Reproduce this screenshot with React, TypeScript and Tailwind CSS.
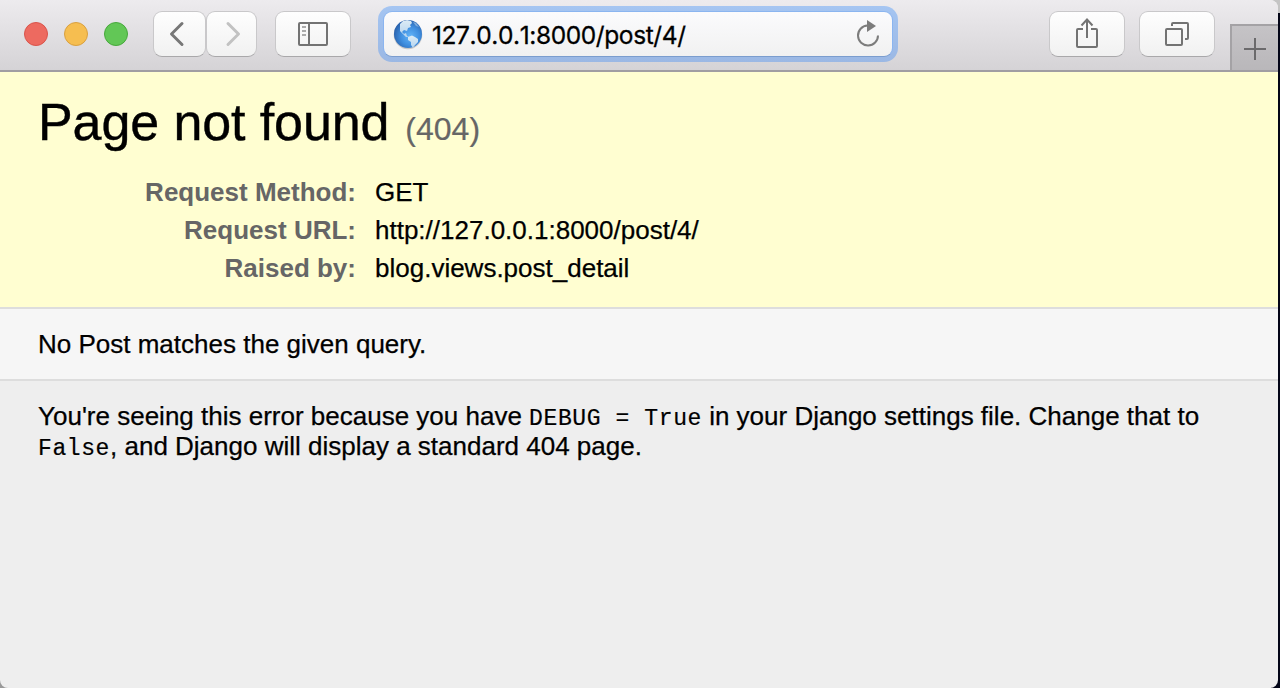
import type { ReactNode } from "react";

const buttonFace =
  "flex h-[46px] items-center justify-center rounded-[9px] border border-[#c9c8ca] border-b-[#a9a8aa] bg-gradient-to-b from-[#fefefe] to-[#f1f1f1]";

const code =
  "font-['Liberation_Mono',monospace] text-[23px] leading-none tracking-[0.6px] [-webkit-text-stroke:0.2px_black]";

function Globe() {
  return (
    <svg width="32" height="32" viewBox="0 0 32 32" className="shrink-0">
      <defs>
        <radialGradient id="sea" cx="0.58" cy="0.58" r="0.6">
          <stop offset="0" stopColor="#62b4f8" />
          <stop offset="0.55" stopColor="#3f8edf" />
          <stop offset="1" stopColor="#2a62ad" />
        </radialGradient>
        <linearGradient id="land" x1="0" y1="0" x2="0" y2="1">
          <stop offset="0" stopColor="#dcecf6" />
          <stop offset="1" stopColor="#b4d3ee" />
        </linearGradient>
        <clipPath id="disc">
          <circle cx="16" cy="16" r="14" />
        </clipPath>
      </defs>
      <circle cx="16" cy="17" r="14.3" fill="#777" opacity="0.35" />
      <circle cx="16" cy="16" r="14" fill="url(#sea)" />
      <g clipPath="url(#disc)" fill="url(#land)">
        <path d="M8 6 L11 3 L15 2 L19 3 L20 5 L18 7 L19 9 L16 10 L15 13 L12 12 L10 14 L12 16 L14 15 L15 18 L17 19 L14 19 L11 16 L8 13 Z" />
        <path d="M16 19 L20 17.500 L23 19 L26 21 L26 24 L23 27 L21 30 L19 27 L19 24 L16 22 Z" />
        <path d="M21 4 L24 5 L27 9 L24 8 Z" opacity="0.5" />
      </g>
    </svg>
  );
}

function Toolbar() {
  return (
    <header className="relative flex h-[72px] w-full items-start border-b-2 border-[#a09da2] bg-gradient-to-b from-[#edebee] to-[#d5d3d6] pt-[11px]">
      <div className="ml-6 mt-[11px] flex gap-4">
        <span className="size-6 rounded-full border border-[#d9544b] bg-[#ed6a60]" />
        <span className="size-6 rounded-full border border-[#d9a040] bg-[#f6be50]" />
        <span className="size-6 rounded-full border border-[#47a83c] bg-[#62c756]" />
      </div>
      <div className="ml-[25px] flex">
        <div className={`${buttonFace} w-[53px]`}>
          <svg width="16" height="26" viewBox="0 0 16 26" fill="none" stroke="#777" strokeWidth="3" strokeLinecap="round" strokeLinejoin="round" className="-translate-x-[3.500px]">
            <path d="M13.500 2.500 3 13l10.500 10.500" />
          </svg>
        </div>
        <div className={`${buttonFace} w-[51px]`}>
          <svg width="16" height="26" viewBox="0 0 16 26" fill="none" stroke="#c2c2c2" strokeWidth="3" strokeLinecap="round" strokeLinejoin="round" className="translate-x-px">
            <path d="M3 2.500 13.500 13 3 23.500" />
          </svg>
        </div>
      </div>
      <div className={`${buttonFace} ml-[18px] w-[76px]`}>
        <svg width="30" height="24" viewBox="0 0 30 24" fill="none" stroke="#737373" strokeWidth="2">
          <rect x="1" y="1" width="28" height="22" rx="1" />
          <path d="M11 1v22" />
          <path d="M4 5h4M4 9h4M4 13h4" stroke="#aaa" />
        </svg>
      </div>
      <div className="-mt-[5px] ml-[27px] h-[56px] w-[520px] rounded-[14px] bg-gradient-to-b from-[#a5c5f2] to-[#9bb8e4] p-[5px]">
        <div className="flex h-full items-center rounded-[9px] border border-[#8bb5f0] border-b-[#7b9dce] bg-gradient-to-b from-[#fbfbfd] to-[#f1f1f1] pl-[8px] pr-[12px]">
          <Globe />
          <span className="ml-[8px] flex-1 translate-y-px whitespace-nowrap font-['Inter',sans-serif] text-[24.500px] leading-[30px] tracking-[-0.4px] text-black [-webkit-text-stroke:0.3px_black] [font-kerning:none]">
            127.0.0.1:8000/post/4/
          </span>
          <svg width="24" height="28" viewBox="0 0 24 28" className="-mt-px">
            <path d="M11.500 5.500A10 10 0 1 0 22 15.500" fill="none" stroke="#7c7c7c" strokeWidth="2" />
            <path d="M11 0v12l9-6z" fill="#7c7c7c" />
          </svg>
        </div>
      </div>
      <div className={`${buttonFace} ml-[151px] w-[76px]`}>
        <svg width="24" height="32" viewBox="0 0 24 32" fill="none" stroke="#737373" strokeWidth="2" className="-translate-y-px">
          <path d="M8 12H3a1 1 0 0 0-1 1v16a1 1 0 0 0 1 1h18a1 1 0 0 0 1-1V13a1 1 0 0 0-1-1h-5M12 21V3M6.500 8.500 12 2.500l5.500 6" />
        </svg>
      </div>
      <div className={`${buttonFace} ml-[14px] w-[76px]`}>
        <svg width="26" height="26" viewBox="0 0 26 26" fill="none" stroke="#737373" strokeWidth="2">
          <rect x="2" y="8" width="16" height="16" rx="1" />
          <path d="M8 5V3a1 1 0 0 1 1-1h14a1 1 0 0 1 1 1v14a1 1 0 0 1-1 1h-2" />
        </svg>
      </div>
      <div className="ml-[15px] mt-[13px] flex h-[46px] w-12 items-center justify-center border-l-2 border-t-2 border-[#a4a2a5] bg-gradient-to-b from-[#c5c3c6] to-[#b9b7ba]">
        <svg width="22" height="22" viewBox="0 0 22 22" stroke="#6b6a6c" strokeWidth="2" className="translate-y-px">
          <path d="M0 11h22M11 0v22" />
        </svg>
      </div>
    </header>
  );
}

function Row({ label, children }: { label: string; children: ReactNode }) {
  return (
    <div className="flex h-[38px] items-center">
      <dt className="w-[318px] text-right font-bold text-[#666]">{label}</dt>
      <dd className="ml-[19px] [-webkit-text-stroke:0.25px_black]">{children}</dd>
    </div>
  );
}

export default function App() {
  return (
    <div className="flex h-[688px] w-[1280px] overflow-hidden bg-[linear-gradient(to_right,#999_20px,transparent_20px),linear-gradient(#c4c4c4_13px,#030517_13px)]">
      <div className="flex w-[1278px] flex-col overflow-hidden rounded-b-[8px] rounded-tr-[8px] bg-[#eee] font-['Liberation_Sans',Arial,sans-serif] text-[26px] leading-[30px] text-black">
        <Toolbar />
        <section className="h-[237px] border-b-2 border-[#ddd] bg-[#fffed1] pl-[38px] pt-[21px]">
          <h1 className="flex h-[58px] items-baseline whitespace-nowrap text-[52px] leading-[58px] tracking-[-0.1px] [-webkit-text-stroke:0.4px_black]">
            Page not found
            <span className="ml-[16px] text-[32px] tracking-normal text-[#666] [-webkit-text-stroke:0.2px_#666]">(404)</span>
          </h1>
          <dl className="mt-[22px]">
            <Row label="Request Method:">GET</Row>
            <Row label="Request URL:">http://127.0.0.1:8000/post/4/</Row>
            <Row label="Raised by:">blog.views.post_detail</Row>
          </dl>
        </section>
        <section className="h-[72px] border-b-2 border-[#ddd] bg-[#f6f6f6] pl-[38px] pt-5 [-webkit-text-stroke:0.25px_black]">
          <p>No Post matches the given query.</p>
        </section>
        <section className="pl-[38px] pt-5">
          <p className="whitespace-nowrap [-webkit-text-stroke:0.25px_black]">
            You're seeing this error because you have{" "}
            <code className={code}>DEBUG = True</code> in your Django settings file. Change that to
            <br />
            <code className={code}>False</code>, and Django will display a standard 404 page.
          </p>
        </section>
      </div>
    </div>
  );
}
